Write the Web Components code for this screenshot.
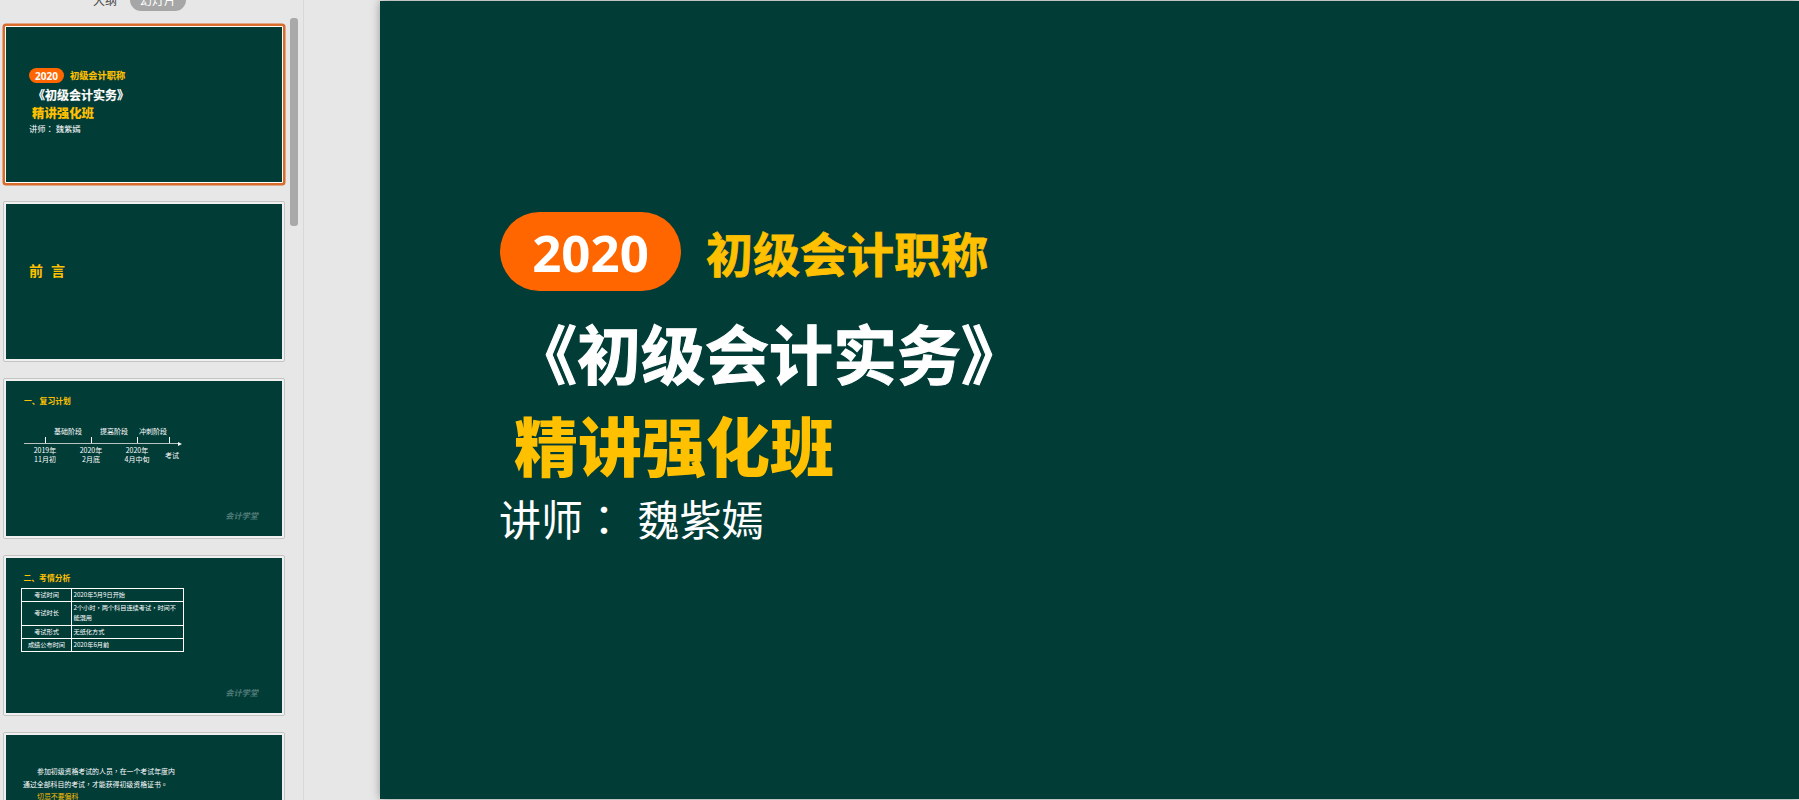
<!DOCTYPE html>
<html lang="zh-CN">
<head>
<meta charset="utf-8">
<title>初级会计实务</title>
<style>
  html, body { margin: 0; height: 100%; overflow: hidden; background: #e7e7e7; }
  body { font-family: "Noto Sans CJK SC", "Noto Sans", sans-serif; }
</style>
</head>
<body>
<ppt-app>
  <ppt-sidebar slot="side">
    <ppt-thumb selected><title-slide thumb></title-slide></ppt-thumb>
    <ppt-thumb><preface-slide></preface-slide></ppt-thumb>
    <ppt-thumb><plan-slide></plan-slide></ppt-thumb>
    <ppt-thumb><exam-slide></exam-slide></ppt-thumb>
    <ppt-thumb><note-slide></note-slide></ppt-thumb>
  </ppt-sidebar>
  <ppt-stage slot="main"><title-slide></title-slide></ppt-stage>
</ppt-app>

<script>
const FONT = '"Noto Sans CJK SC", "Noto Sans", sans-serif';
const BG = "#013c37";
const GOLD = "#ffc000";
// the reference centres its full-width punctuation, the TC cut does that
const PUNCT = `.p { font-family: "Noto Sans CJK TC", sans-serif; }`;
const mark = (ch) => `<span class="p" lang="zh-TW">${ch}</span>`;

// page shell: thumbnail column + stage
class PptApp extends HTMLElement {
  constructor() {
    super();
    this.attachShadow({ mode: "open" });
    this.shadowRoot.innerHTML = `
      <style>
        :host { display: flex; width: 100%; height: 800px; overflow: hidden; font-family: ${FONT}; }
      </style>
      <slot name="side"></slot>
      <slot name="main"></slot>
    `;
  }
}

class PptSidebar extends HTMLElement {
  constructor() {
    super();
    this.attachShadow({ mode: "open" });
    this.shadowRoot.innerHTML = `
      <style>
        :host {
          display: block;
          position: relative;
          flex: 0 0 303px;
          height: 800px;
          overflow: hidden;
          border-right: 1px solid #d8d8d8;
          box-sizing: content-box;
        }
        .tabs {
          display: flex;
          align-items: center;
          gap: 13px;
          height: 22px;
          margin-top: -11px;
          margin-bottom: 13px;
          padding-left: 93px;
          font-size: 12px;
          line-height: 22px;
          color: #444;
        }
        .tabs .on {
          padding: 0 10px;
          border-radius: 11px;
          background: #a6a6a6;
          color: #fff;
        }
        .list {
          display: flex;
          flex-direction: column;
          gap: 16px;
          padding-left: 3px;
        }
        .scroll {
          position: absolute;
          left: 290px;
          top: 18px;
          width: 8px;
          height: 208px;
          border-radius: 3px;
          background: #a9a9a9;
        }
      </style>
      <div class="tabs"><span>大纲</span><span class="on">幻灯片</span></div>
      <div class="list"><slot></slot></div>
      <div class="scroll"></div>
    `;
  }
}

class PptThumb extends HTMLElement {
  constructor() {
    super();
    this.attachShadow({ mode: "open" });
    this.shadowRoot.innerHTML = `
      <style>
        :host {
          display: block;
          flex: none;
          width: 282px;
          height: 161px;
          box-sizing: border-box;
          padding: 2px;
          border: 1px solid #c4c4c4;
          border-radius: 2px;
          background: #f0f0f0;
        }
        :host([selected]) {
          padding: 1px;
          border: 2px solid #d96b2b;
          border-radius: 3px;
          box-shadow: 0 0 0 .5px #d96b2b;
          background: #fff;
        }
        .screen {
          position: relative;
          width: 276px;
          height: 155px;
          overflow: hidden;
          background: ${BG};
        }
      </style>
      <div class="screen"><slot></slot></div>
    `;
  }
}

class PptStage extends HTMLElement {
  constructor() {
    super();
    this.attachShadow({ mode: "open" });
    this.shadowRoot.innerHTML = `
      <style>
        :host {
          display: block;
          flex: 1;
          min-width: 0;
          height: 800px;
          box-sizing: border-box;
          padding: 1px 0 1px 76px;
        }
        .page {
          height: 798px;
          background: ${BG};
          box-shadow: 0 0 9px rgba(0, 0, 0, .35);
        }
      </style>
      <div class="page"><slot></slot></div>
    `;
  }
}

// cover slide, used full size and as a thumbnail
class TitleSlide extends HTMLElement {
  constructor() {
    super();
    this.attachShadow({ mode: "open" });
    this.shadowRoot.innerHTML = `
      <style>
        :host {
          display: block;
          padding-top: 211px;
          white-space: nowrap;
          font-family: ${FONT};
          color: #fff;
        }
        ${PUNCT}
        .top { display: flex; align-items: center; gap: 25px; margin-left: 120px; }
        .pill {
          display: flex;
          align-items: center;
          justify-content: center;
          width: 181px;
          height: 79px;
          border-radius: 40px;
          background: #ff6600;
          font: 700 51px "Noto Sans", sans-serif;
        }
        .rank { font-size: 47px; font-weight: 700; color: ${GOLD}; line-height: 1; -webkit-text-stroke: .8px ${GOLD}; }
        .name { margin: 14px 0 0 133px; font-size: 64px; font-weight: 700; line-height: 92px; -webkit-text-stroke: 1px #fff; }
        .cls { margin-left: 134px; font-size: 64px; font-weight: 900; line-height: 92px; color: ${GOLD}; }
        .who { margin-left: 119px; font-size: 42px; line-height: 58px; word-spacing: 3px; }

        :host([thumb]) { padding-top: 41px; }
        :host([thumb]) .top { gap: 6px; margin-left: 23px; }
        :host([thumb]) .pill { width: 35px; height: 15px; border-radius: 8px; font-size: 10px; }
        :host([thumb]) .rank { font-size: 9.2px; -webkit-text-stroke: .15px ${GOLD}; }
        :host([thumb]) .name { margin: 4.5px 0 0 27px; font-size: 12px; line-height: 14px; -webkit-text-stroke: .2px #fff; }
        :host([thumb]) .cls { margin-left: 26px; font-size: 12.4px; line-height: 23px; }
        :host([thumb]) .who { margin: -2px 0 0 23px; font-size: 8.3px; line-height: 10px; word-spacing: 0; }
      </style>
      <div class="top"><div class="pill">2020</div><div class="rank">初级会计职称</div></div>
      <div class="name">《初级会计实务》</div>
      <div class="cls">精讲强化班</div>
      <div class="who">讲师${mark("：")} 魏紫嫣</div>
    `;
  }
}

class PrefaceSlide extends HTMLElement {
  constructor() {
    super();
    this.attachShadow({ mode: "open" });
    this.shadowRoot.innerHTML = `
      <style>
        :host {
          display: block;
          padding: 56px 0 0 23px;
          font: 700 14px/20px ${FONT};
          letter-spacing: 8px;
          color: ${GOLD};
        }
      </style>
      前言
    `;
  }
}

// small grey logo text in the corner of the content slides
const LOGO = `
  .logo {
    position: absolute;
    right: 24px;
    bottom: 15px;
    font: italic 700 8.2px/12px ${FONT};
    color: #4f7a75;
  }
`;

class PlanSlide extends HTMLElement {
  constructor() {
    super();
    this.attachShadow({ mode: "open" });
    this.shadowRoot.innerHTML = `
      <style>
        :host {
          display: block;
          padding: 14px 0 0 18px;
          font: 7px/9px ${FONT};
          color: #fff;
        }
        h2 { margin: 0 0 20px; font: 700 7.8px/12px ${FONT}; color: ${GOLD}; }
        .stages, .axis { display: grid; grid-template-columns: 21px 46px 46px 32px 11px; width: 156px; }
        .stages span { text-align: center; white-space: nowrap; }
        .stages { height: 10px; }
        .axis { position: relative; height: 6px; border-bottom: 1.5px solid #b7c4c2; }
        .axis i { border-left: 1px solid #fff; }
        .axis i:first-child { border: 0; }
        .axis::after {
          content: "";
          position: absolute;
          right: -2px;
          bottom: -3px;
          border-left: 4px solid #fff;
          border-top: 2px solid transparent;
          border-bottom: 2px solid transparent;
        }
        .dates {
          display: grid;
          grid-template-columns: 46px 46px 46px 24px;
          margin: 2px 0 0 -2px;
          text-align: center;
          white-space: nowrap;
          align-items: center;
        }
        ${LOGO}
      </style>
      <h2>一、复习计划</h2>
      <div class="stages"><span></span><span>基础阶段</span><span>提高阶段</span><span>冲刺阶段</span><span></span></div>
      <div class="axis"><i></i><i></i><i></i><i></i><i></i></div>
      <div class="dates">
        <div>2019年<br>11月初</div>
        <div>2020年<br>2月底</div>
        <div>2020年<br>4月中旬</div>
        <div>考试</div>
      </div>
      <div class="logo">会计学堂</div>
    `;
  }
}

class ExamSlide extends HTMLElement {
  constructor() {
    super();
    this.attachShadow({ mode: "open" });
    this.shadowRoot.innerHTML = `
      <style>
        :host {
          display: block;
          padding: 12px 0 0 15px;
          font: 6.2px/10px ${FONT};
          color: #fff;
        }
        ${PUNCT}
        h2 { margin: 0 0 3px 2.5px; font: 700 7.8px/15px ${FONT}; color: ${GOLD}; }
        table { width: 163px; table-layout: fixed; border-collapse: collapse; }
        td { padding: 1.15px 1.5px; border: 1px solid #fff; }
        td:first-child { width: 46px; text-align: center; white-space: nowrap; }
        ${LOGO}
      </style>
      <h2>二、考情分析</h2>
      <table>
        <tr><td>考试时间</td><td>2020年5月9日开始</td></tr>
        <tr><td>考试时长</td><td>2个小时${mark("，")}两个科目连续考试${mark("，")}时间不能混用</td></tr>
        <tr><td>考试形式</td><td>无纸化方式</td></tr>
        <tr><td>成绩公布时间</td><td>2020年6月前</td></tr>
      </table>
      <div class="logo">会计学堂</div>
    `;
  }
}

class NoteSlide extends HTMLElement {
  constructor() {
    super();
    this.attachShadow({ mode: "open" });
    this.shadowRoot.innerHTML = `
      <style>
        :host {
          display: block;
          padding: 30px 0 0 17px;
          font: 6.9px/12.5px ${FONT};
          color: #fff;
        }
        ${PUNCT}
        p { margin: 0; width: 154px; text-indent: 14px; }
        .warn { color: ${GOLD}; }
      </style>
      <p>参加初级资格考试的人员${mark("，")}在一个考试年度内通过全部科目的考试${mark("，")}才能获得初级资格证书${mark("。")}</p>
      <p class="warn">切忌不要偏科</p>
    `;
  }
}

customElements.define("ppt-app", PptApp);
customElements.define("ppt-sidebar", PptSidebar);
customElements.define("ppt-thumb", PptThumb);
customElements.define("ppt-stage", PptStage);
customElements.define("title-slide", TitleSlide);
customElements.define("preface-slide", PrefaceSlide);
customElements.define("plan-slide", PlanSlide);
customElements.define("exam-slide", ExamSlide);
customElements.define("note-slide", NoteSlide);
</script>
</body>
</html>
